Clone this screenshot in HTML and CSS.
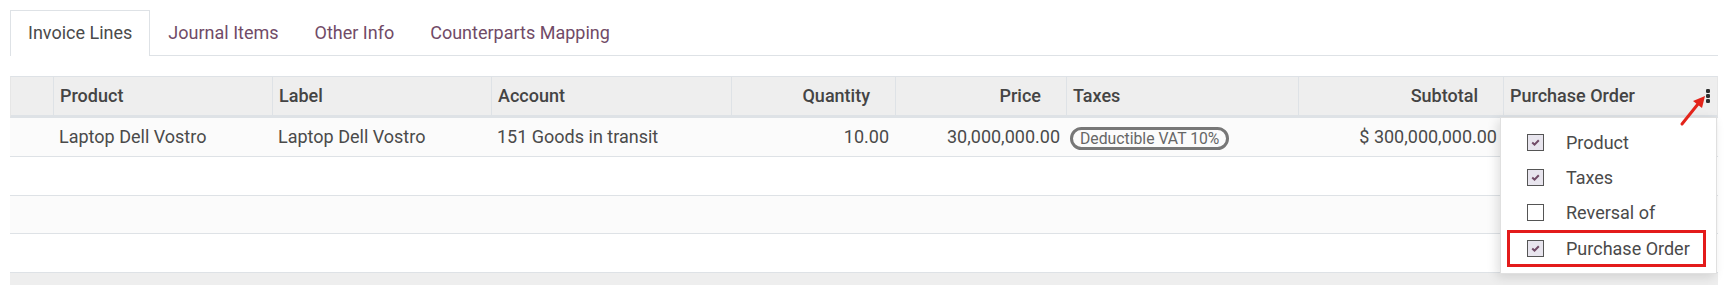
FILE: index.html
```html
<!DOCTYPE html>
<html>
<head>
<meta charset="utf-8">
<link rel="stylesheet" href="styles.css">
</head>
<body>
<div class="page">
  <ul class="tabs">
    <li class="tab active">Invoice Lines</li>
    <li class="tab">Journal Items</li>
    <li class="tab">Other Info</li>
    <li class="tab">Counterparts Mapping</li>
  </ul>
  <div class="list-wrap">
    <table class="list">
      <colgroup>
        <col style="width:43px"><col style="width:219px"><col style="width:219px"><col style="width:240px"><col style="width:164px"><col style="width:171px"><col style="width:232px"><col style="width:205px"><col style="width:215px">
      </colgroup>
      <thead>
        <tr>
          <th class="handle"></th>
          <th>Product</th>
          <th>Label</th>
          <th>Account</th>
          <th class="num">Quantity</th>
          <th class="num">Price</th>
          <th>Taxes</th>
          <th class="num">Subtotal</th>
          <th class="last"><div class="th-flex"><span>Purchase Order</span><svg class="kebab" width="4" height="14" viewBox="0 0 4 14"><rect x="0" y="0" width="4" height="4" rx="1.3"/><rect x="0" y="5" width="4" height="4" rx="1.3"/><rect x="0" y="10" width="4" height="4" rx="1.3"/></svg></div></th>
        </tr>
      </thead>
      <tbody>
        <tr class="odd">
          <td></td>
          <td>Laptop Dell Vostro</td>
          <td>Laptop Dell Vostro</td>
          <td>151 Goods in transit</td>
          <td class="num">10.00</td>
          <td class="num">30,000,000.00</td>
          <td class="tags"><span class="badge">Deductible VAT 10%</span></td>
          <td class="num">$ 300,000,000.00</td>
          <td></td>
        </tr>
        <tr><td colspan="9"></td></tr>
        <tr class="odd"><td colspan="9"></td></tr>
        <tr><td colspan="9"></td></tr>
      </tbody>
      <tfoot>
        <tr><td colspan="9"></td></tr>
      </tfoot>
    </table>
    <div class="dropdown">
      <div class="dd-item"><span class="cb checked"><svg width="9" height="7" viewBox="0 0 9 7"><path d="M1.2 3.6 L3.5 5.6 L7.8 1.2" fill="none" stroke="#714B67" stroke-width="2"/></svg></span><span>Product</span></div>
      <div class="dd-item"><span class="cb checked"><svg width="9" height="7" viewBox="0 0 9 7"><path d="M1.2 3.6 L3.5 5.6 L7.8 1.2" fill="none" stroke="#714B67" stroke-width="2"/></svg></span><span>Taxes</span></div>
      <div class="dd-item"><span class="cb"></span><span>Reversal of</span></div>
      <div class="dd-item highlight"><span class="cb checked"><svg width="9" height="7" viewBox="0 0 9 7"><path d="M1.2 3.6 L3.5 5.6 L7.8 1.2" fill="none" stroke="#714B67" stroke-width="2"/></svg></span><span>Purchase Order</span></div>
    </div>
  </div>
</div>
<svg class="arrow" width="1731" height="296" viewBox="0 0 1731 296">
  <line x1="1682" y1="124" x2="1698" y2="104" stroke="#e3241b" stroke-width="3" stroke-linecap="round"/>
  <polygon points="1705,96 1702,108 1693,101" fill="#e3241b"/>
</svg>
</body>
</html>
```
FILE: styles.css
```css
* { box-sizing: border-box; }
html, body { margin: 0; padding: 0; background: #fff; }
body {
  font-family: Roboto, "Liberation Sans", sans-serif;
  font-size: 18px;
  color: #4a4a4a;
}
.page {
  padding-left: 10px;
  width: 1718px;
}
.tabs {
  list-style: none;
  margin: 10px 0 0 0;
  padding: 0;
  display: flex;
  border-bottom: 1px solid #dee2e6;
}
.tab {
  padding: 10px 17px 11px;
  line-height: 24px;
  border: 1px solid transparent;
  border-bottom: 0;
  color: #714B67;
  margin-bottom: -1px;
}
.tab.active {
  color: #4a4a4a;
  border-color: #dee2e6;
  background: #fff;
}
.list-wrap {
  position: relative;
  margin-top: 20px;
  width: 1708px;
}
.list {
  table-layout: fixed;
  border-collapse: separate;
  border-spacing: 0;
  width: 1708px;
}
.list th {
  background: #eeeeee;
  border-top: 1px solid #dee2e6;
  border-bottom: 3px solid #dee2e6;
  border-left: 1px solid #dee2e6;
  padding: 7px 6px;
  line-height: 24px;
  font-weight: 500;
  text-align: left;
  color: #444;
  white-space: nowrap;
}
.list th.handle { border-left: 1px solid #e6e6e6; }
.list th.last { border-right: 1px solid #e6e6e6; padding-right: 7px; }
.list th.num { text-align: right; padding-right: 25px; }
.th-flex { display: flex; align-items: center; justify-content: space-between; }
.kebab { fill: #2f2f2f; display: block; }
.list td {
  padding: 7px 6px 6.5px;
  line-height: 24px;
  height: 38.5px;
  border-bottom: 1px solid #dee2e6;
  vertical-align: middle;
  white-space: nowrap;
}
.list td.num { text-align: right; }
.list td.tags { padding-left: 4px; }
.list tbody tr { background: #fff; }
.list tbody tr.odd { background: #fbfbfb; }
.list tfoot td {
  height: 12px;
  padding: 0;
  line-height: 0;
  background: #eeeeee;
  border-top: 0;
  border-bottom: 0;
}
.badge {
  display: inline-block;
  border: 3px solid #777;
  border-radius: 12px;
  padding: 0 7px;
  font-size: 15.75px;
  line-height: 17px;
  color: #666;
  vertical-align: middle;
}
.dropdown {
  position: absolute;
  left: 1490px;
  top: 41px;
  width: 217px;
  background: #fff;
  border: 1px solid rgba(0,0,0,0.12);
  box-shadow: -3px 3px 10px rgba(0,0,0,0.12);
  padding: 7px 0 6px;
}
.dd-item {
  display: flex;
  align-items: center;
  height: 35px;
  padding-left: 26px;
  color: #4a4a4a;
}
.dd-item.highlight {
  border: 3px solid #e31b1b;
  margin: 0 10px 0 6px;
  padding-left: 17px;
  height: 37px;
}
.cb {
  width: 17px;
  height: 17px;
  border: 1px solid #555;
  background: #fff;
  margin-right: 22px;
  display: flex;
  align-items: center;
  justify-content: center;
  flex: none;
}
.cb.checked { background: #e8e5ee; }
.cb svg { display: block; }
.arrow {
  position: absolute;
  left: 0;
  top: 0;
  pointer-events: none;
}
```
